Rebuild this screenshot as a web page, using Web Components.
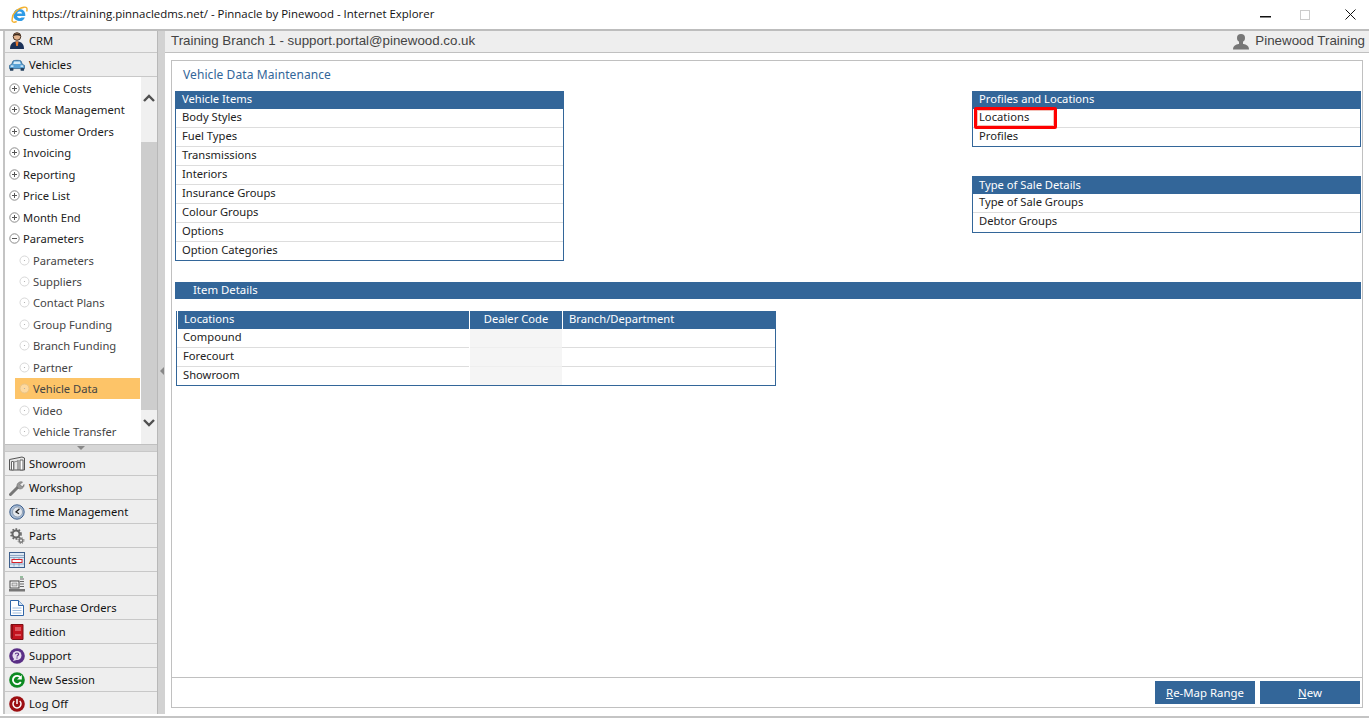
<!DOCTYPE html>
<html lang="en"><head><meta charset="utf-8"><title>Pinnacle by Pinewood</title>
<style>
html,body{margin:0;padding:0;height:719px;overflow:hidden;background:#fff}
body{font:11.2px "Noto Sans","Liberation Sans",sans-serif;color:#222}
</style></head><body>
<x-app></x-app>
<script>
const ICONS={
crm:`<svg viewBox="0 0 16 18" width="16" height="18"><circle cx="8" cy="4.500" r="3.800" fill="#e3b48e" stroke="#4a3325"/><path d="M4.100 4.300C4.500.500 11.500.500 11.900 4.300 9 3 7 3 4.100 4.300Z" fill="#3b2a1e"/><path d="M1 17c0-5 2.500-7.500 7-7.500s7 2.500 7 7.500Z" fill="#1b3157"/><path d="M6.500 9.500h3L8.800 14H7.200Z" fill="#e8772a"/></svg>`,
car:`<svg viewBox="0 0 18 14" width="18" height="14"><path d="M.5 11V7.500L3 6.200 4.500 2.500C5 1.500 13 1.500 13.500 2.500L15 6.200 17.500 7.500V11Z" fill="#5aa3d6" stroke="#2a5a85" stroke-width=".8"/><path d="M4.800 6 5.800 3h6.400l1 3Z" fill="#d6ebf8"/><rect x="1" y="10.500" width="4" height="3" rx="1" fill="#24405e"/><rect x="13" y="10.500" width="4" height="3" rx="1" fill="#24405e"/><rect x="2" y="7.500" width="3" height="1.500" fill="#e9f3fa"/><rect x="13" y="7.500" width="3" height="1.500" fill="#e9f3fa"/></svg>`,
show:`<svg viewBox="0 0 16 16" width="16" height="16"><path d="M.5 3.500 13 1l2.500 1v12H.5Z" fill="#e6e6e6" stroke="#555"/><path d="M2.500 5.500h2v8.500h-2ZM9 4v10M11 4h3v10h-3Z" fill="#fff" stroke="#666"/><path d="M5 14V6l4-1" fill="none" stroke="#888"/></svg>`,
wrench:`<svg viewBox="0 0 16 16" width="16" height="16"><path d="M1.500 14.500 9 7" stroke="#777" stroke-width="3" stroke-linecap="round"/><path d="M8 6.500C7.500 3.500 10.500 1 13.500 2L11 4.500 12 6 14 6.500 15 4.500C15.500 7.500 12 10 9.500 8.500Z" fill="#999" stroke="#666" stroke-width=".6"/></svg>`,
clock:`<svg viewBox="0 0 16 16" width="16" height="16"><circle cx="8" cy="8" r="7.200" fill="#a9bdd6" stroke="#3d5f8c"/><circle cx="8.500" cy="8" r="5" fill="#e4e8ee" stroke="#6d7f96" stroke-width=".6"/><path d="M10.500 4.800 7 8l3 1.800" fill="none" stroke="#222" stroke-width="1.300"/></svg>`,
gears:`<svg viewBox="0 0 16 16" width="16" height="16"><circle cx="7" cy="6" r="3.500" fill="none" stroke="#666" stroke-width="2"/><circle cx="7" cy="6" r="5" fill="none" stroke="#666" stroke-width="1.600" stroke-dasharray="1.700 1.500"/><circle cx="12" cy="12.500" r="1.800" fill="none" stroke="#777" stroke-width="1.400"/><circle cx="12" cy="12.500" r="3" fill="none" stroke="#777" stroke-width="1" stroke-dasharray="1.200 1.200"/></svg>`,
acct:`<svg viewBox="0 0 16 16" width="16" height="16"><rect x=".5" y=".5" width="15" height="15" fill="#dbe7f3" stroke="#3d5f8c"/><path d="M1 3.500h14M1 5.500h14M1 12h14M5 5.500v9M10 5.500v9" stroke="#8fa8c4" fill="none"/><rect x="3" y="7.500" width="10" height="3" fill="#fff" stroke="#d8232a"/></svg>`,
epos:`<svg viewBox="0 0 16 16" width="16" height="16"><rect x="1" y="5" width="9" height="7" fill="#fff" stroke="#444"/><rect x="3" y="7" width="5" height="3" fill="#ddd" stroke="#666" stroke-width=".6"/><path d="M11 3h4M11 5.500h4M11 8h4M11 10.500h4" stroke="#666"/><path d="M11 1h3" stroke="#3a8a4a"/><rect x="0" y="13" width="16" height="2.500" fill="#777"/></svg>`,
doc:`<svg viewBox="0 0 16 16" width="16" height="16"><path d="M1.500.5h8l5 5v10h-13Z" fill="#fff" stroke="#2f65a8"/><path d="M9.500.5v5h5" fill="#cfe0f2" stroke="#2f65a8"/><path d="M3.500 8h9M3.500 10.500h9M3.500 13h9" stroke="#9dbbdc"/></svg>`,
book:`<svg viewBox="0 0 14 16" width="14" height="16"><path d="M1 .5h12v15H3a2 2 0 0 1-2-2Z" fill="#c4141f" stroke="#7d0e14"/><rect x="1.500" y="1" width="1.500" height="13" fill="#8a0e16"/><path d="M5 4h6M5 6h6M5 11h6" stroke="#f09aa0"/></svg>`,
support:`<svg viewBox="0 0 16 16" width="16" height="16"><circle cx="8" cy="8" r="7.800" fill="#5a2f86"/><circle cx="8" cy="7.500" r="4.500" fill="#e7dfef"/><path d="M4 13l1.500-3 2 2Z" fill="#e7dfef"/><path d="M6.300 6.200C6.500 4.600 9.600 4.600 9.600 6.300 9.600 7.400 8 7.400 8 8.600" fill="none" stroke="#5a2f86" stroke-width="1.200"/><rect x="7.400" y="9.400" width="1.200" height="1.200" fill="#5a2f86"/></svg>`,
session:`<svg viewBox="0 0 16 16" width="16" height="16"><circle cx="8" cy="8" r="7.800" fill="#0d8a22"/><path d="M11.500 5.500A4.200 4.200 0 1 0 11.800 10" fill="none" stroke="#fff" stroke-width="1.800"/><path d="M8 7.500h4.800V3Z" fill="#fff"/></svg>`,
power:`<svg viewBox="0 0 16 16" width="16" height="16"><circle cx="8" cy="8" r="7.800" fill="#9c0f12"/><path d="M5.300 5A4 4 0 1 0 10.700 5" fill="none" stroke="#fff" stroke-width="1.500"/><path d="M8 3v5" stroke="#fff" stroke-width="1.500"/></svg>`
};
function el(name,html,Cls=HTMLElement){
  const C=class extends Cls{constructor(){super();this.attachShadow({mode:'open'}).innerHTML=typeof html==='function'?html(this):html;}};
  customElements.define(name,C);
}
el('x-navbtn',h=>`<style>
:host{display:flex;flex:none;align-items:center;height:23px;background:#eee;border-top:1px solid #c8c8c8;box-sizing:content-box;color:#111}
i{display:flex;width:16px;height:18px;margin-left:4px;margin-right:4px;align-items:center;justify-content:center;flex:none}
</style><i>${ICONS[h.getAttribute('icon')]}</i><span><slot></slot></span>`);
el('x-tree',h=>{
 const kind=h.getAttribute('kind'),sel=h.hasAttribute('selected');
 const ic= kind==='child'
  ? `<svg width="11" height="11" viewBox="0 0 11 11"><circle cx="5.500" cy="5.500" r="4.500" fill="${sel?'#fdd9a0':'#fff'}" stroke="${sel?'#e8c48a':'#d8d8d8'}"/><circle cx="5.500" cy="5.500" r=".6" fill="#aaa"/></svg>`
  : `<svg width="11" height="11" viewBox="0 0 11 11"><circle cx="5.500" cy="5.500" r="4.700" fill="#fff" stroke="#8a8a8a"/><path d="M3 5.500h5${kind==='open'?'':'M5.500 3v5'}" stroke="#555" fill="none"/></svg>`;
 return `<style>
 :host{display:flex;align-items:center;height:21.44px;color:${kind==='child'?'#444':'#222'};white-space:nowrap;padding-left:4px;
   ${kind==='child'?'margin-left:10px;margin-right:1px;':''}
   ${sel?'background:#fdc468;':''}}
 svg{flex:none;margin-right:3px}
 </style>${ic}<slot></slot>`;});
el('x-scroll',`<style>
:host{display:flex;flex-direction:column;width:16px;background:#f0f0f0;align-items:center;flex:none}
.b{height:65px;display:flex;align-items:flex-start;justify-content:center;flex:none}
.t{height:268px;width:16px;background:#cdcdcd;flex:none}
.e{height:34px;display:flex;align-items:flex-start;justify-content:center;flex:none}
path{fill:none;stroke:#505050;stroke-width:2.400}
</style><div class="b"><svg width="12" height="9" viewBox="0 0 12 9" style="margin-top:17px"><path d="M1 7 6 2l5 5"/></svg></div><div class="t"></div><div class="e"><svg width="12" height="9" viewBox="0 0 12 9" style="margin-top:8px"><path d="M1 2l5 5 5-5"/></svg></div>`);
el('x-sidebar',`<style>
:host{display:flex;flex-direction:column;width:152px;flex:none;border-left:2px solid #c4c4c4;margin-left:3px;border-right:1px solid #b8b8b8;height:683px;background:#fff;overflow:hidden}
.head{flex:none}
.head x-navbtn:first-child{border-top:0;height:19px;padding-bottom:2px}
.list{display:flex;flex:none;height:367px;background:#fff;border-top:1px solid #c8c8c8;box-sizing:content-box}
.tree{flex:1;min-width:0;padding-top:.8px}
.grip{height:6px;background:#d6d6d6;border-top:1px solid #c0c0c0;display:flex;justify-content:center;align-items:center;flex:none}
.grip b{width:0;height:0;border:4px solid transparent;border-top:4px solid #888;border-bottom:0}
</style>
<div class="head">
<x-navbtn icon="crm">CRM</x-navbtn><x-navbtn icon="car">Vehicles</x-navbtn></div>
<div class="list"><div class="tree">
<x-tree kind="closed">Vehicle Costs</x-tree><x-tree kind="closed">Stock Management</x-tree><x-tree kind="closed">Customer Orders</x-tree><x-tree kind="closed">Invoicing</x-tree><x-tree kind="closed">Reporting</x-tree><x-tree kind="closed">Price List</x-tree><x-tree kind="closed">Month End</x-tree><x-tree kind="open">Parameters</x-tree>
<x-tree kind="child">Parameters</x-tree><x-tree kind="child">Suppliers</x-tree><x-tree kind="child">Contact Plans</x-tree><x-tree kind="child">Group Funding</x-tree><x-tree kind="child">Branch Funding</x-tree><x-tree kind="child">Partner</x-tree><x-tree kind="child" selected>Vehicle Data</x-tree><x-tree kind="child">Video</x-tree><x-tree kind="child">Vehicle Transfer</x-tree>
</div><x-scroll></x-scroll></div>
<div class="grip"><b></b></div>
<x-navbtn icon="show">Showroom</x-navbtn><x-navbtn icon="wrench">Workshop</x-navbtn><x-navbtn icon="clock">Time Management</x-navbtn><x-navbtn icon="gears">Parts</x-navbtn><x-navbtn icon="acct">Accounts</x-navbtn><x-navbtn icon="epos">EPOS</x-navbtn><x-navbtn icon="doc">Purchase Orders</x-navbtn><x-navbtn icon="book">edition</x-navbtn><x-navbtn icon="support">Support</x-navbtn><x-navbtn icon="session">New Session</x-navbtn><x-navbtn icon="power">Log Off</x-navbtn>`);
el('x-titlebar',`<style>
:host{display:flex;align-items:center;height:29px;border-bottom:2px solid #bdbdbd;background:#fff;font:11.44px "Open Sans","Liberation Sans",sans-serif;color:#111;flex:none}
.logo{margin:0 4px 0 11px;display:flex}
.t{flex:1;white-space:nowrap;padding-bottom:2px}
.w{display:flex;align-items:center;height:20px}
.w svg{display:block}
</style>
<span class="logo"><svg width="17" height="17" viewBox="0 0 17 17"><path d="M8.500 3a6 6 0 1 0 5.400 8.400h-3.400a2.700 2.700 0 0 1-4.500-1.500h8.300C14.700 6 12.300 3 8.500 3ZM6 7.500A2.700 2.700 0 0 1 11.200 7.500Z" fill="#2f9be6"/><path d="M1.300 13.500C.5 8 7 2 13 1.200c2.700-.4 3.600 1 2.700 4.300M2.200 10.500c-2.500 4.500-.8 7 3.500 5" fill="none" stroke="#f3b12f" stroke-width="1.400"/></svg></span>
<span class="t"><slot></slot></span>
<span class="w">
<svg width="11" height="2" style="margin-right:29px;margin-top:4px"><rect width="11" height="1.500" fill="#111"/></svg>
<svg width="10" height="10" style="margin-right:35px"><rect x=".5" y=".5" width="9" height="9" fill="none" stroke="#ccc"/></svg>
<svg width="11" height="11" style="margin-right:13px"><path d="M.5.500l10 10M10.500.500l-10 10" stroke="#111" fill="none"/></svg>
</span>`);
el('x-topbar',`<style>
:host{display:flex;align-items:center;justify-content:space-between;height:18px;padding:0 4px 3px 6px;background:#eee;border-bottom:1px solid #c0c0c0;font:13.33px "Liberation Sans",sans-serif;color:#444;flex:none}
.u{display:flex;align-items:center;gap:6px}
svg{margin-top:2px}
</style><span><slot name="l"></slot></span><span class="u"><svg width="16" height="17" viewBox="0 0 16 17"><circle cx="8" cy="5" r="4" fill="#777"/><path d="M0 16.500c0-4 3-5 5.500-5.500h5c2.500.5 5.500 1.500 5.500 5.500Z" fill="#777"/><path d="M6 8h4v4H6Z" fill="#777"/></svg><slot name="r"></slot></span>`);
el('x-panel',h=>`<style>
:host{display:block;border:1px solid #336699;border-top:0;box-sizing:border-box;background:#fff;width:389px;position:relative}
.h{background:#336699;color:#fff;height:18px;line-height:${h.getAttribute('lh')||15}px;padding-left:7px;margin:0 -1px}
</style><div class="h">${h.getAttribute('title')}</div><slot></slot>`);
el('x-row',`<style>
:host{display:block;height:19px;box-sizing:border-box;line-height:15px;padding-left:6px;border-bottom:1px solid #ddd;color:#222}
:host(:last-of-type){border-bottom:0}
</style><slot></slot>`);
el('x-section',`<style>
:host{display:block;background:#336699;color:#fff;height:17px;line-height:16px;padding-left:18px;font-size:11.4px}
</style><slot></slot>`);
el('x-grid',`<style>
:host{display:grid;grid-template-columns:292px 93px 213px;width:600px;box-sizing:border-box;border:1px solid #336699;border-top:0;color:#222}
.h{background:#336699;color:#fff;height:18px;line-height:15px;padding-left:6px;box-sizing:border-box;border-left:1px solid #fff}
.h:first-child{border-left:0;margin-left:-1px;padding-left:5px}
.h:last-child{margin-right:-1px}
.c{text-align:center;padding-left:0}
.d{height:19px;line-height:15px;padding-left:6px;box-sizing:border-box;border-bottom:1px solid #ddd}
.m{background:#f5f5f5;margin-left:1px;border-bottom-color:#eee}
.n{border-bottom:0;height:18px}
</style>
<div class="h">Locations</div><div class="h c">Dealer Code</div><div class="h">Branch/Department</div>
<div class="d">Compound</div><div class="d m"></div><div class="d"></div>
<div class="d">Forecourt</div><div class="d m"></div><div class="d"></div>
<div class="d n">Showroom</div><div class="d m n"></div><div class="d n"></div>`);
el('x-btn',`<style>
:host{display:flex;align-items:center;justify-content:center;width:100px;height:23px;background:#336699;color:#fff;font-size:11.4px}
</style><slot></slot>`);
el('x-main',`<style>
:host{display:flex;flex-direction:column;flex:1;min-width:0;box-sizing:border-box}
.box{margin:7px 6px 8px 6px;border:1px solid #c0c0c0;flex:1;display:flex;flex-direction:column;min-height:0}
.body{flex:1;padding:0 1px 0 3px}
.ttl{color:#336699;height:30px;line-height:28px;padding-left:8px;box-sizing:border-box;font-size:12px;letter-spacing:.08px}
.cols{display:flex;justify-content:space-between;height:191px}
.r{display:flex;flex-direction:column;gap:29px}
.foot{height:30px;border-top:1px solid #c0c0c0;display:flex;justify-content:flex-end;align-items:flex-start;gap:5px;padding:3px 2px 0 0;box-sizing:border-box}
.g{margin:12px 0 0 1px}
.red{position:absolute;left:1px;top:16px;width:83px;height:22px;border:3px solid #f00;border-radius:2px;box-sizing:border-box;box-shadow:inset 0 0 0 1px #f3c0b8;pointer-events:none}
u{text-decoration:underline}
</style>
<x-topbar><span slot="l">Training Branch 1 - support.portal@pinewood.co.uk</span><span slot="r">Pinewood Training</span></x-topbar>
<div class="box"><div class="body">
<div class="ttl">Vehicle Data Maintenance</div>
<div class="cols">
<x-panel title="Vehicle Items" style="height:170px"><x-row>Body Styles</x-row><x-row>Fuel Types</x-row><x-row>Transmissions</x-row><x-row>Interiors</x-row><x-row>Insurance Groups</x-row><x-row>Colour Groups</x-row><x-row>Options</x-row><x-row>Option Categories</x-row></x-panel>
<div class="r">
<x-panel title="Profiles and Locations" style="height:56px"><x-row>Locations</x-row><x-row>Profiles</x-row><span class="red"></span></x-panel>
<x-panel title="Type of Sale Details" lh="17" style="height:57px"><x-row>Type of Sale Groups</x-row><x-row>Debtor Groups</x-row></x-panel>
</div></div>
<x-section>Item Details</x-section>
<div class="g"><x-grid></x-grid></div>
</div>
<div class="foot"><x-btn><span><u>R</u>e-Map Range</span></x-btn><x-btn><span><u>N</u>ew</span></x-btn></div>
</div>`);
el('x-app',`<style>
:host{display:flex;flex-direction:column;height:719px;width:1369px;overflow:hidden}
.mid{display:flex;height:685px;flex:none}
.split{width:7px;background:#d2d2d2;flex:none;display:flex;align-items:center;justify-content:center;height:683px}
.split b{width:0;height:0;border:4px solid transparent;border-right:4px solid #888;border-left:0;margin-top:-3px}
.bot{height:2px;background:#c4c4c4;flex:none}
</style>
<x-titlebar>https://training.pinnacledms.net/ - Pinnacle by Pinewood - Internet Explorer</x-titlebar>
<div class="mid"><x-sidebar></x-sidebar><div class="split"><b></b></div><x-main></x-main></div>
<div class="bot"></div>`);
</script>
</body></html>
